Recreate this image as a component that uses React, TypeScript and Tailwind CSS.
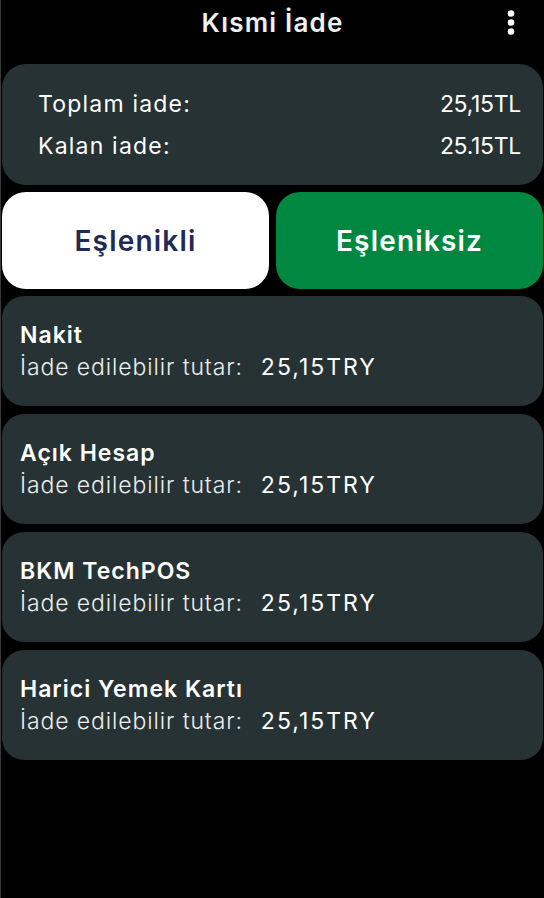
const methods = ["Nakit", "Açık Hesap", "BKM TechPOS", "Harici Yemek Kartı"];

function MethodCard({ name }: { name: string }) {
  return (
    <div className="flex h-[110px] flex-col justify-center rounded-[22px] bg-[#263234] px-[18px]">
      <p className="text-[23px] font-semibold leading-[32px] tracking-[1px] text-white">{name}</p>
      <p className="flex items-baseline text-[23px] font-light leading-[32px] tracking-[0.9px] text-[#eceff0]">
        İade edilebilir tutar:
        <span className="ml-[18px] font-normal tracking-[2px] text-white">25,15TRY</span>
      </p>
    </div>
  );
}

export default function App() {
  return (
    <div
      className="flex h-[898px] w-[544px] flex-col border-l border-[#3a3a3a] bg-black"
      style={{ fontFamily: "Inter, 'Noto Sans', sans-serif" }}
    >
      <header className="relative flex h-[45px] items-center justify-center">
        <h1 className="text-[26px] font-semibold tracking-[1.2px] text-[#eef0f0]">Kısmi İade</h1>
        <svg className="absolute right-[29px] top-[9px] h-[27px] w-[8px]" viewBox="0 0 8 27" fill="white">
          <circle cx="4" cy="4.5" r="3.3" />
          <circle cx="4" cy="13.5" r="3.3" />
          <circle cx="4" cy="22.5" r="3.3" />
        </svg>
      </header>

      <div className="mt-[19px] flex flex-col gap-[7px] px-[1px]">
        <section className="flex h-[121px] flex-col justify-center gap-[14px] rounded-[24px] bg-[#263234] pl-[36px] pr-[22px]">
          <div className="flex justify-between text-[23px] font-normal leading-[28px] text-white">
            <span className="tracking-[1.2px]">Toplam iade:</span>
            <span className="tracking-[-0.3px]">25,15TL</span>
          </div>
          <div className="flex justify-between text-[23px] font-normal leading-[28px] text-white">
            <span className="tracking-[1.2px]">Kalan iade:</span>
            <span className="tracking-[-0.3px]">25.15TL</span>
          </div>
        </section>

        <div className="grid grid-cols-2 gap-[7px]">
          <button className="h-[97px] rounded-[24px] bg-white text-[28px] font-semibold tracking-[1.2px] text-[#1f2a56]">
            Eşlenikli
          </button>
          <button className="h-[97px] rounded-[24px] bg-[#008840] text-[28px] font-semibold tracking-[1.2px] text-white">
            Eşleniksiz
          </button>
        </div>

        <div className="flex flex-col gap-[8px]">
          {methods.map((m) => (
            <MethodCard key={m} name={m} />
          ))}
        </div>
      </div>
    </div>
  );
}
